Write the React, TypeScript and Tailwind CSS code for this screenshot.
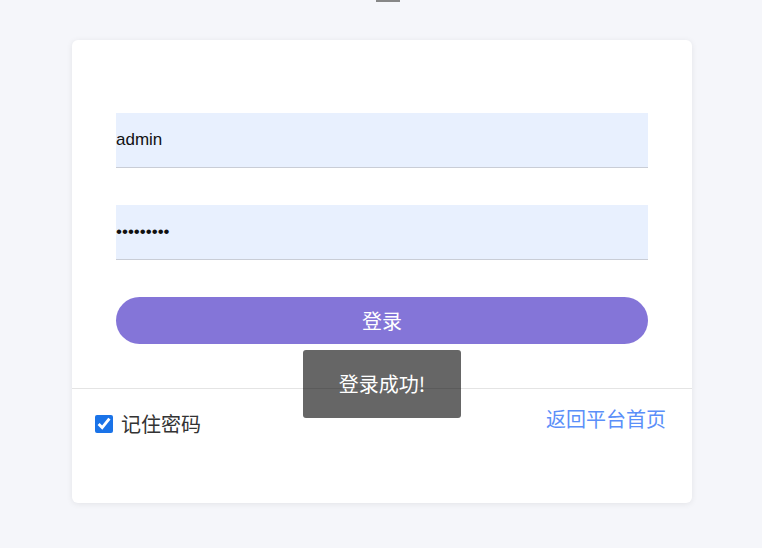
import { useState } from 'react';

const cjk = '"Noto Sans CJK SC", "Liberation Sans", sans-serif';

export default function App() {
  const [remember, setRemember] = useState(true);

  return (
    <div
      className="relative min-h-[548px] bg-[#f5f6fa]"
      style={{ fontFamily: cjk }}
    >
      {/* tail of the heading above the fold */}
      <div className="ml-[376px] h-[2px] w-[24px] bg-[#878787]" />

      {/* Login card */}
      <div className="ml-[72px] mt-[38px] h-[463px] w-[620px] rounded-[6px] bg-white shadow-[0_1px_6px_rgba(0,0,0,0.08)]">
        <div className="flex flex-col gap-[37px] px-[44px] pt-[73px]">
          <input
            defaultValue="admin"
            className="h-[55px] w-full border-b border-[#c9cdd6] bg-[#e8f0fe] text-[17px] text-[#111] outline-none"
            style={{ fontFamily: '"Liberation Sans", Arial, sans-serif' }}
          />
          <input
            type="password"
            defaultValue="123456789"
            className="h-[55px] w-full border-b border-[#c9cdd6] bg-[#e8f0fe] text-[17px] text-[#111] outline-none"
            style={{ fontFamily: '"Liberation Sans", Arial, sans-serif' }}
          />
          <button className="h-[47px] w-full rounded-full bg-[#8475d8] text-[20px] text-white">
            登录
          </button>
        </div>

        {/* Divider */}
        <div className="mt-[44px] h-px bg-[#e4e4e4]" />

        {/* Footer */}
        <div className="flex items-start justify-between pl-[23px] pr-[26px] pt-[16px]">
          <label className="mt-[5px] flex items-center gap-[8px] text-[20px] leading-[28px] text-[#333]">
            <input
              type="checkbox"
              checked={remember}
              onChange={(e) => setRemember(e.target.checked)}
              className="h-[18px] w-[18px] accent-[#1a73e8]"
            />
            记住密码
          </label>
          <a href="#" className="text-[20px] leading-[28px] text-[#5b8ff9]">
            返回平台首页
          </a>
        </div>
      </div>

      {/* Toast */}
      <div className="absolute left-[303px] top-[350px] flex h-[68px] w-[158px] items-center justify-center rounded-[3px] bg-black/60 text-[20px] text-white">
        登录成功!
      </div>
    </div>
  );
}
